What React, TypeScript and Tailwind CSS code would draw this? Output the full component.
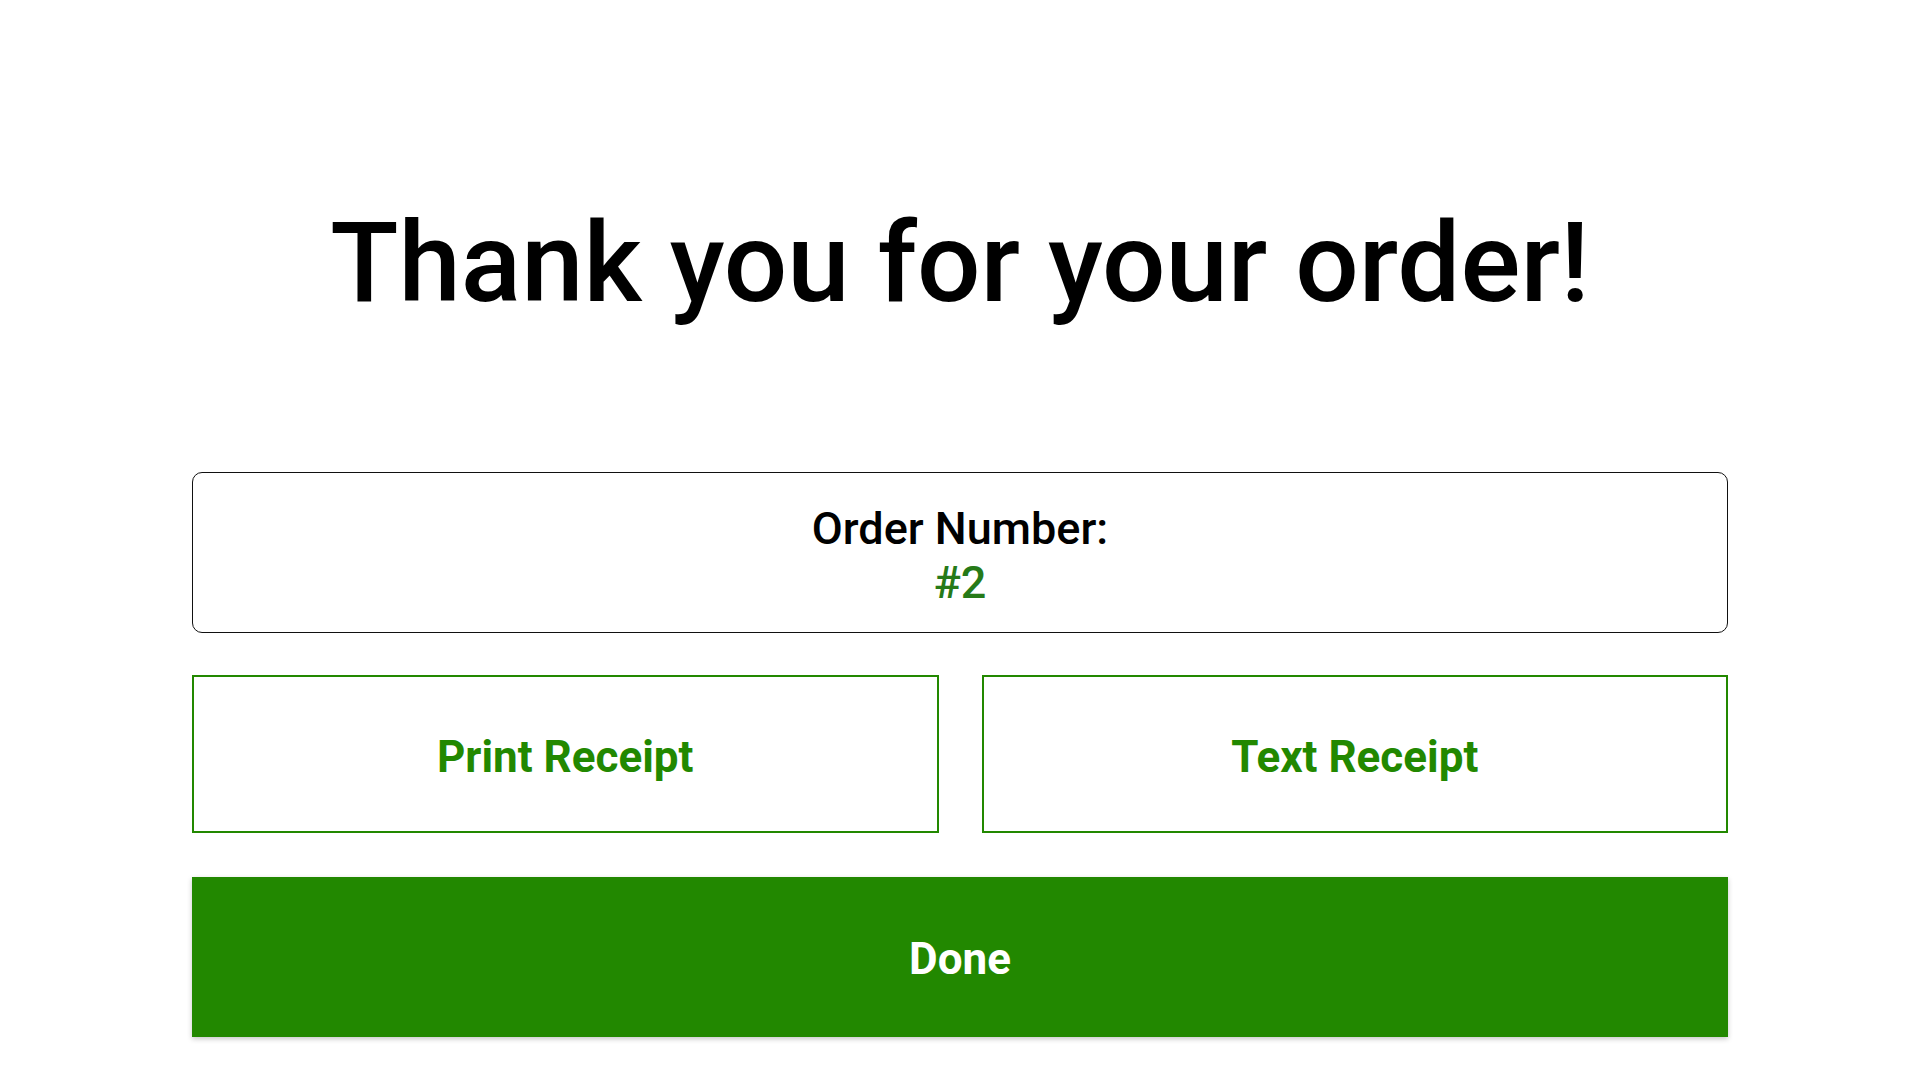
export default function App() {
  return (
    <div className="min-h-screen bg-white font-['Roboto',sans-serif] flex flex-col items-center pt-[207px]">
      <h1 className="text-[112px] leading-[112px] font-medium text-black">
        Thank you for your order!
      </h1>

      <div className="w-[1536px] mt-[153px] flex flex-col">
        <div className="h-[161px] border border-[#111] rounded-[10px] flex flex-col items-center justify-center pt-[6px]">
          <div className="text-[45px] leading-[54px] font-medium text-black">Order Number:</div>
          <div className="text-[45px] leading-[54px] font-medium text-[#267a18]">#2</div>
        </div>

        <div className="mt-[42px] grid grid-cols-2 gap-[43px]">
          <button className="h-[158px] pt-[5px] border-2 border-[#228800] bg-white text-[#228800] text-[44px] font-bold">
            Print Receipt
          </button>
          <button className="h-[158px] pt-[5px] border-2 border-[#228800] bg-white text-[#228800] text-[44px] font-bold">
            Text Receipt
          </button>
        </div>

        <button className="mt-[44px] h-[160px] pt-[3px] bg-[#228800] text-white text-[44px] font-bold shadow-[0_2px_5px_rgba(0,0,0,0.22)]">
          Done
        </button>
      </div>
    </div>
  );
}
